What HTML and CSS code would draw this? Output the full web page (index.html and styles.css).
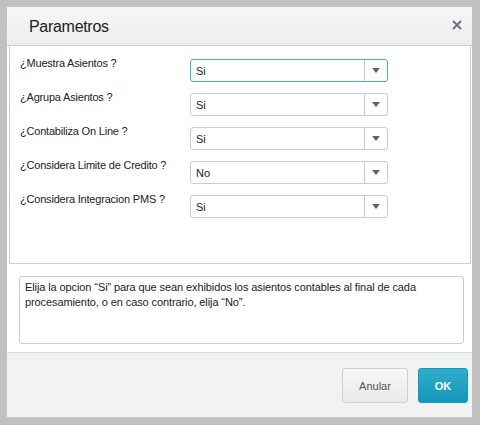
FILE: index.html
```html
<!DOCTYPE html>
<html lang="es">
<head>
  <meta charset="UTF-8" />
  <title>Parametros</title>
  <link rel="stylesheet" href="styles.css">
</head>
<body>

  <div class="dialog">
    <div class="dialog-header">
      <h1>Parametros</h1>
      <span class="close">
        <svg width="10" height="10" viewBox="0 0 10 10">
          <path d="M1 1 L9 9 M9 1 L1 9" stroke="#6b6f78" stroke-width="1.8" fill="none"/>
        </svg>
      </span>
    </div>

    <div class="params">
      <div class="field-row">
        <label>¿Muestra Asientos ?</label>
        <div class="select focused">
          <span class="value">Si</span>
          <span class="arrow"><svg width="8" height="5" viewBox="0 0 8 5"><path d="M0 0 H8 L4 5 Z" fill="#5d6370"/></svg></span>
        </div>
      </div>
      <div class="field-row">
        <label>¿Agrupa Asientos ?</label>
        <div class="select">
          <span class="value">Si</span>
          <span class="arrow"><svg width="8" height="5" viewBox="0 0 8 5"><path d="M0 0 H8 L4 5 Z" fill="#5d6370"/></svg></span>
        </div>
      </div>
      <div class="field-row">
        <label>¿Contabiliza On Line ?</label>
        <div class="select">
          <span class="value">Si</span>
          <span class="arrow"><svg width="8" height="5" viewBox="0 0 8 5"><path d="M0 0 H8 L4 5 Z" fill="#5d6370"/></svg></span>
        </div>
      </div>
      <div class="field-row">
        <label>¿Considera Limite de Credito ?</label>
        <div class="select">
          <span class="value">No</span>
          <span class="arrow"><svg width="8" height="5" viewBox="0 0 8 5"><path d="M0 0 H8 L4 5 Z" fill="#5d6370"/></svg></span>
        </div>
      </div>
      <div class="field-row">
        <label>¿Considera Integracion PMS ?</label>
        <div class="select">
          <span class="value">Si</span>
          <span class="arrow"><svg width="8" height="5" viewBox="0 0 8 5"><path d="M0 0 H8 L4 5 Z" fill="#5d6370"/></svg></span>
        </div>
      </div>
    </div>

    <div class="help">
      <div class="help-text">Elija la opcion “Si” para que sean exhibidos los asientos contables al final de cada procesamiento, o en caso contrario, elija “No”.</div>
    </div>

    <div class="dialog-footer">
      <button class="btn">Anular</button>
      <button class="btn btn-primary">OK</button>
    </div>
  </div>

</body>
</html>
```

FILE: styles.css
```css
* {
  box-sizing: border-box;
  margin: 0;
  padding: 0;
  font-family: 'Liberation Sans', Arial, sans-serif;
}

body {
  background: #c1c1c1;
  width: 480px;
  height: 425px;
  overflow: hidden;
}

.dialog {
  margin: 7px 0 0 7px;
  width: 465px;
  height: 410px;
  background: #fff;
  display: flex;
  flex-direction: column;
}

.dialog-header {
  height: 39px;
  background: linear-gradient(#f5f6f6, #eceeef);
  border-bottom: 1px solid #cfcfcf;
  display: flex;
  align-items: center;
  justify-content: space-between;
  padding: 0 10px 0 22px;
  flex-shrink: 0;
}

.dialog-header h1 {
  font-size: 16px;
  font-weight: normal;
  color: #1c1c1c;
  letter-spacing: -0.3px;
  margin-top: 1px;
}

.close {
  display: flex;
  margin-top: -2px;
}

.params {
  height: 218px;
  margin: 0 1px 0 2px;
  border: 1px solid #cccccc;
  border-top: none;
  padding: 13px 0 0 10px;
  flex-shrink: 0;
}

.field-row {
  display: flex;
  height: 23px;
  margin-bottom: 11px;
}

.field-row label {
  width: 170px;
  font-size: 11px;
  line-height: 12px;
  letter-spacing: -0.2px;
  margin-top: -2px;
  color: #222;
}

.select {
  width: 198px;
  height: 23px;
  border: 1px solid #cccccc;
  border-radius: 3px;
  display: flex;
  align-items: stretch;
  background: #fff;
}

.select.focused {
  border-color: #45b1d1;
}

.select .value {
  flex: 1;
  font-size: 11px;
  color: #222;
  padding-left: 5px;
  display: flex;
  align-items: center;
}

.select .arrow {
  width: 23px;
  border-left: 1px solid #cccccc;
  display: flex;
  align-items: center;
  justify-content: center;
}

.help {
  height: 88px;
  padding: 12px 8px 8px 12px;
  flex-shrink: 0;
}

.help-text {
  height: 68px;
  border: 1px solid #cccccc;
  border-radius: 3px;
  padding: 3px 5px;
  font-size: 11px;
  line-height: 15px;
  letter-spacing: -0.1px;
  color: #222;
}

.dialog-footer {
  flex: 1;
  background: #f1f2f2;
  border-top: 1px solid #dcdcdc;
  display: flex;
  justify-content: flex-end;
  align-items: flex-start;
  gap: 10px;
  padding: 15px 4px 0 0;
}

.btn {
  height: 35px;
  width: 66px;
  font-size: 11px;
  color: #555;
  border: 1px solid #cfcfcf;
  border-radius: 3px;
  background: linear-gradient(#f8f8f8, #e9e9e9);
}

.btn-primary {
  width: 50px;
  color: #fff;
  font-weight: bold;
  border-color: #1a97b8;
  background: linear-gradient(#2eadcd, #1696b8);
}
```
